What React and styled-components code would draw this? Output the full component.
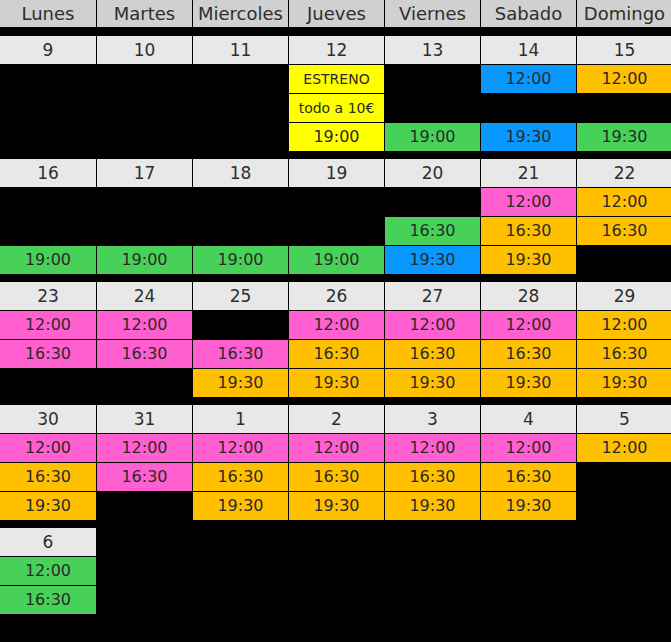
import styled, { createGlobalStyle } from "styled-components";

const GlobalStyle = createGlobalStyle`
  html, body {
    margin: 0;
    padding: 0;
    background: #000;
    overflow: hidden;
  }
`;

const COLORS = {
  yellow: "#ffff00",
  green: "#47d158",
  blue: "#0898ff",
  orange: "#ffc000",
  pink: "#ff5fcf",
};

const Page = styled.div`
  min-height: 100vh;
  background: #000;
  font-family: "DejaVu Sans", "Liberation Sans", sans-serif;
  color: #262626;
  display: flex;
  flex-direction: column;
  gap: 8px;
`;

const Grid = styled.div`
  display: grid;
  grid-template-columns: 96px repeat(6, 95px);
  grid-auto-rows: 28px;
  gap: 1px;
  width: 672px;
`;

const HeaderGrid = styled(Grid)`
  grid-auto-rows: 27px;
  margin-bottom: 1px;
`;

const DayName = styled.div`
  background: #d0d0d0;
  font-size: 18px;
  line-height: 27px;
  text-align: center;
  color: #2e2e2e;
  white-space: nowrap;
`;

const DateCell = styled.div`
  background: #e8e8e8;
  font-size: 17px;
  line-height: 28px;
  text-align: center;
  color: #2e2e2e;
`;

const Slot = styled.div`
  background: ${(p) => (p.$color ? COLORS[p.$color] : "transparent")};
  font-size: ${(p) => (p.$small ? "14px" : "16px")};
  line-height: 28px;
  text-align: center;
  white-space: nowrap;
  color: #2a2a2a;
`;

const days = ["Lunes", "Martes", "Miercoles", "Jueves", "Viernes", "Sabado", "Domingo"];

// each week: list of days, each day: [date, [slots...]] slot = [text, color] or null
const weeks = [
  [
    ["9", [null, null, null]],
    ["10", [null, null, null]],
    ["11", [null, null, null]],
    ["12", [["ESTRENO", "yellow", true], ["todo a 10€", "yellow", true], ["19:00", "yellow"]]],
    ["13", [null, null, ["19:00", "green"]]],
    ["14", [["12:00", "blue"], null, ["19:30", "blue"]]],
    ["15", [["12:00", "orange"], null, ["19:30", "green"]]],
  ],
  [
    ["16", [null, null, ["19:00", "green"]]],
    ["17", [null, null, ["19:00", "green"]]],
    ["18", [null, null, ["19:00", "green"]]],
    ["19", [null, null, ["19:00", "green"]]],
    ["20", [null, ["16:30", "green"], ["19:30", "blue"]]],
    ["21", [["12:00", "pink"], ["16:30", "orange"], ["19:30", "orange"]]],
    ["22", [["12:00", "orange"], ["16:30", "orange"], null]],
  ],
  [
    ["23", [["12:00", "pink"], ["16:30", "pink"], null]],
    ["24", [["12:00", "pink"], ["16:30", "pink"], null]],
    ["25", [null, ["16:30", "pink"], ["19:30", "orange"]]],
    ["26", [["12:00", "pink"], ["16:30", "orange"], ["19:30", "orange"]]],
    ["27", [["12:00", "pink"], ["16:30", "orange"], ["19:30", "orange"]]],
    ["28", [["12:00", "pink"], ["16:30", "orange"], ["19:30", "orange"]]],
    ["29", [["12:00", "orange"], ["16:30", "orange"], ["19:30", "orange"]]],
  ],
  [
    ["30", [["12:00", "pink"], ["16:30", "orange"], ["19:30", "orange"]]],
    ["31", [["12:00", "pink"], ["16:30", "pink"], null]],
    ["1", [["12:00", "pink"], ["16:30", "orange"], ["19:30", "orange"]]],
    ["2", [["12:00", "pink"], ["16:30", "orange"], ["19:30", "orange"]]],
    ["3", [["12:00", "pink"], ["16:30", "orange"], ["19:30", "orange"]]],
    ["4", [["12:00", "pink"], ["16:30", "orange"], ["19:30", "orange"]]],
    ["5", [["12:00", "orange"], null, null]],
  ],
  [["6", [["12:00", "green"], ["16:30", "green"]]]],
];

const Week = ({ week }) => {
  const rows = Math.max(...week.map((d) => d[1].length));
  const cells = [];
  week.forEach(([date], i) => cells.push(<DateCell key={`d${i}`}>{date}</DateCell>));
  for (let i = week.length; i < 7; i++) cells.push(<Slot key={`de${i}`} />);
  for (let r = 0; r < rows; r++) {
    for (let c = 0; c < 7; c++) {
      const s = week[c] ? week[c][1][r] : null;
      cells.push(
        s ? (
          <Slot key={`s${r}-${c}`} $color={s[1]} $small={s[2]}>
            {s[0]}
          </Slot>
        ) : (
          <Slot key={`s${r}-${c}`} />
        )
      );
    }
  }
  return <Grid>{cells}</Grid>;
};

export default function App() {
  return (
    <>
      <GlobalStyle />
      <Page>
        <HeaderGrid>
          {days.map((d) => (
            <DayName key={d}>{d}</DayName>
          ))}
        </HeaderGrid>
        {weeks.map((w, i) => (
          <Week key={i} week={w} />
        ))}
      </Page>
    </>
  );
}
